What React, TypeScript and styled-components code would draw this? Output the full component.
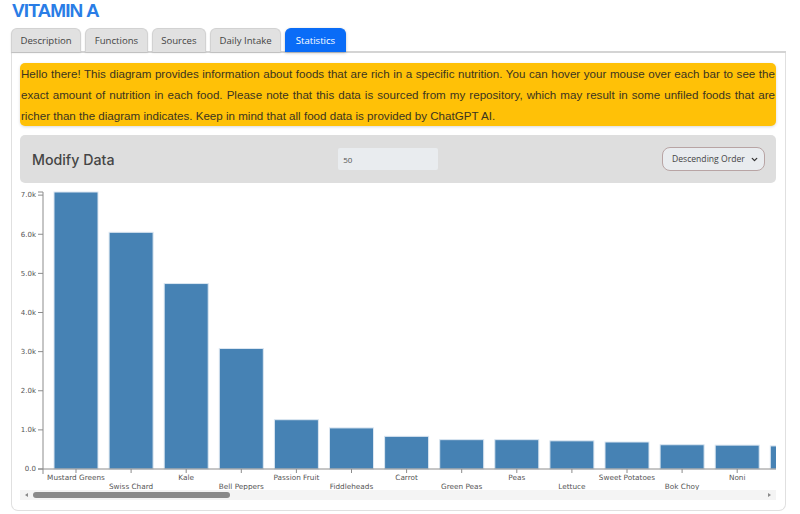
import { useRef, useState } from 'react'
import styled, { createGlobalStyle } from 'styled-components'
import { ChevronDown } from 'lucide-react'

const GlobalStyle = createGlobalStyle`
  body {
    margin: 0;
    background: #ffffff;
    font-family: "Open Sans", "Liberation Sans", sans-serif;
  }
`

// ─── data ──────────────────────────────────────────────────────────────────────

const FOODS: { name: string; value: number }[] = [
  { name: 'Mustard Greens', value: 7080 },
  { name: 'Swiss Chard', value: 6050 },
  { name: 'Kale', value: 4740 },
  { name: 'Bell Peppers', value: 3080 },
  { name: 'Passion Fruit', value: 1260 },
  { name: 'Fiddleheads', value: 1050 },
  { name: 'Carrot', value: 835 },
  { name: 'Green Peas', value: 750 },
  { name: 'Peas', value: 750 },
  { name: 'Lettuce', value: 720 },
  { name: 'Sweet Potatoes', value: 690 },
  { name: 'Bok Choy', value: 620 },
  { name: 'Noni', value: 610 },
  { name: 'Spinach', value: 590 },
  { name: 'Mango', value: 560 },
  { name: 'Cantaloupe', value: 530 },
  { name: 'Apricots', value: 500 },
  { name: 'Pumpkin', value: 470 },
  { name: 'Butternut Squash', value: 440 },
  { name: 'Tomatoes', value: 410 },
  { name: 'Broccoli', value: 380 },
  { name: 'Papaya', value: 350 },
  { name: 'Red Peppers', value: 330 },
  { name: 'Watermelon', value: 310 },
  { name: 'Grapefruit', value: 290 },
  { name: 'Guava', value: 270 },
  { name: 'Persimmon', value: 250 },
  { name: 'Egg Yolk', value: 230 },
  { name: 'Cheese', value: 210 },
  { name: 'Milk', value: 190 },
  { name: 'Butter', value: 175 },
  { name: 'Collard Greens', value: 160 },
  { name: 'Turnip Greens', value: 150 },
  { name: 'Dandelion Greens', value: 140 },
  { name: 'Beet Greens', value: 130 },
  { name: 'Asparagus', value: 120 },
  { name: 'Okra', value: 110 },
  { name: 'Plums', value: 100 },
  { name: 'Peaches', value: 92 },
  { name: 'Nectarines', value: 85 },
  { name: 'Tangerines', value: 78 },
  { name: 'Cherries', value: 70 },
  { name: 'Kiwi', value: 62 },
  { name: 'Zucchini', value: 55 },
  { name: 'Brussels Sprouts', value: 48 },
  { name: 'Cabbage', value: 40 },
  { name: 'Oranges', value: 34 },
  { name: 'Corn', value: 28 },
  { name: 'Avocado', value: 22 },
  { name: 'Celery', value: 15 },
]

// ─── layout ────────────────────────────────────────────────────────────────────

const Page = styled.div`
  padding: 0 0 4px 11px;
  width: 775px;
`

const Title = styled.h1`
  margin: 0 0 6px 1px;
  font-family: "Liberation Sans", Arial, sans-serif;
  font-size: 19px;
  line-height: 22px;
  letter-spacing: -0.9px;
  font-weight: 700;
  color: #2a7de6;
`

const TabBar = styled.div`
  display: flex;
  gap: 4px;
  border-bottom: 2px solid #d4d4d4;
`

const Tab = styled.button<{ $active?: boolean }>`
  height: 24px;
  padding: 0 ${({ $active }) => ($active ? 9.5 : 8.5)}px;
  margin-bottom: -1px;
  border: 1px solid ${({ $active }) => ($active ? '#0a6cf5' : '#d2d2d2')};
  border-bottom: none;
  border-radius: 6px 6px 0 0;
  background: ${({ $active }) => ($active ? '#0a6cf7' : '#e1e1e1')};
  color: ${({ $active }) => ($active ? '#ffffff' : '#444444')};
  font-family: "Open Sans", sans-serif;
  font-size: 9.6px;
  box-shadow: ${({ $active }) => ($active ? '0 1px 3px rgba(0,0,0,0.25)' : '0 1px 2px rgba(0,0,0,0.12)')};
  cursor: pointer;
`

const Panel = styled.div`
  border: 1px solid #e0e0e0;
  border-top: none;
  border-radius: 0 0 7px 7px;
  padding: 10px 9px 10px 8px;
  display: flex;
  flex-direction: column;
`

const Notice = styled.p`
  margin: 0;
  background: #ffc107;
  border-radius: 5px;
  box-shadow: 0 1px 3px rgba(0, 0, 0, 0.15);
  font-family: "Liberation Sans", Arial, sans-serif;
  font-size: 11.6px;
  line-height: 21px;
  color: #3b3420;
  text-align: justify;
  padding: 0 1px;
`

const ModifyBar = styled.div`
  margin-top: 9px;
  height: 48px;
  background: #dedede;
  border-radius: 5px;
  display: flex;
  align-items: center;
  justify-content: space-between;
  padding: 0 11px 0 12px;
`

const ModifyTitle = styled.h2`
  margin: 0;
  font-family: "Inter", "Open Sans", sans-serif;
  font-size: 14.2px;
  font-weight: 500;
  color: #454545;
`

const LimitInput = styled.input`
  width: 100px;
  height: 22px;
  box-sizing: border-box;
  border: none;
  border-radius: 2px;
  background: #e9ecef;
  padding: 0 5px;
  font-family: "Open Sans", sans-serif;
  font-size: 8px;
  color: #555555;
  outline: none;
`

const SelectWrap = styled.div`
  position: relative;
  display: flex;
`

const OrderSelect = styled.select`
  appearance: none;
  width: 103px;
  height: 24px;
  border: 1.5px solid #b8a4a4;
  border-radius: 8px;
  background: #e9ecef;
  padding: 0 16px 0 9px;
  font-family: "Open Sans", sans-serif;
  font-size: 8.6px;
  color: #444444;
`

const SelectArrow = styled(ChevronDown)`
  position: absolute;
  right: 6px;
  top: 8px;
  pointer-events: none;
  color: #333333;
`

const ChartScroll = styled.div`
  margin-top: 3px;
  overflow-x: auto;
  overflow-y: hidden;
  scrollbar-width: none;
`

const ChartSvg = styled.svg`
  display: block;
  font-family: "DejaVu Sans", Verdana, sans-serif;
`

const ScrollTrack = styled.div`
  height: 10px;
  background: #f4f4f4;
  display: flex;
  align-items: center;
  padding: 0 3px;
  gap: 3px;
`

const ScrollArrow = styled.span<{ $dir: 'left' | 'right' }>`
  width: 0;
  height: 0;
  margin: 0 2px;
  border-top: 2.5px solid transparent;
  border-bottom: 2.5px solid transparent;
  ${({ $dir }) => ($dir === 'left' ? 'border-right: 3px solid #8a8a8a;' : 'border-left: 3px solid #8a8a8a;')}
`

const ScrollRail = styled.div`
  flex: 1;
  height: 6px;
  position: relative;
`

const ScrollThumb = styled.div`
  position: absolute;
  top: 0;
  height: 6px;
  border-radius: 3px;
  background: #8a8a8a;
`

// ─── chart ─────────────────────────────────────────────────────────────────────

const AXIS_X = 23
const BASE_Y = 283
const TOP_Y = 6
const STEP = 55.1
const BAR_W = 44
const PAD = 11
const HEIGHT = 304
const WIDTH = AXIS_X + PAD + FOODS.length * STEP + 10
const VIEW_W = 755

const BarChart = () => {
  const max = Math.max(...FOODS.map((f) => f.value))
  const y = (v: number) => BASE_Y - (v / max) * (BASE_Y - TOP_Y)
  const ticks = [0, 1000, 2000, 3000, 4000, 5000, 6000, 7000]
  const fmt = (v: number) => (v === 0 ? '0.0' : `${(v / 1000).toFixed(1)}k`)
  const endX = AXIS_X + FOODS.length * STEP + 6

  return (
    <ChartSvg width={WIDTH} height={HEIGHT}>
      {FOODS.map((f, i) => {
        const x = AXIS_X + PAD + i * STEP
        return (
          <rect
            key={f.name}
            x={x}
            y={y(f.value)}
            width={BAR_W}
            height={BASE_Y - y(f.value)}
            fill="#4682b4"
            stroke="#dbe6f1"
            strokeWidth={1}
          >
            <title>{`${f.name}: ${f.value} µg`}</title>
          </rect>
        )
      })}

      {/* y axis */}
      <path
        d={`M${AXIS_X - 5},${TOP_Y}H${AXIS_X}V${BASE_Y}H${AXIS_X - 5}`}
        fill="none"
        stroke="#8c8c8c"
      />
      {ticks.map((t) => (
        <g key={t} transform={`translate(0,${y(t)})`}>
          <line x1={AXIS_X - 5} x2={AXIS_X} stroke="#8c8c8c" />
          <text x={AXIS_X - 7} dy="0.32em" textAnchor="end" fontSize={7} fill="#555">
            {fmt(t)}
          </text>
        </g>
      ))}

      {/* x axis */}
      <path d={`M${AXIS_X},${BASE_Y + 5}V${BASE_Y}H${endX}V${BASE_Y + 5}`} fill="none" stroke="#8c8c8c" />
      {FOODS.map((f, i) => {
        const cx = AXIS_X + PAD + i * STEP + BAR_W / 2
        return (
          <g key={f.name} transform={`translate(${cx},${BASE_Y})`}>
            <line y2={4} stroke="#8c8c8c" />
            <text y={i % 2 === 0 ? 11 : 19.5} textAnchor="middle" fontSize={7.3} fill="#555">
              {f.name}
            </text>
          </g>
        )
      })}
    </ChartSvg>
  )
}

// ─── App ───────────────────────────────────────────────────────────────────────

const TABS = ['Description', 'Functions', 'Sources', 'Daily Intake', 'Statistics']

export default function App() {
  const scrollRef = useRef<HTMLDivElement>(null)
  const [progress, setProgress] = useState(0)
  const railW = VIEW_W - 26
  const thumbW = Math.round((VIEW_W / WIDTH) * railW)

  const onScroll = () => {
    const el = scrollRef.current
    if (!el) return
    setProgress(el.scrollLeft / Math.max(1, el.scrollWidth - el.clientWidth))
  }

  return (
    <Page>
      <GlobalStyle />
      <Title>VITAMIN A</Title>
      <TabBar>
        {TABS.map((t) => (
          <Tab key={t} $active={t === 'Statistics'}>
            {t}
          </Tab>
        ))}
      </TabBar>
      <Panel>
        <Notice>
          Hello there! This diagram provides information about foods that are rich in a specific
          nutrition. You can hover your mouse over each bar to see the exact amount of nutrition in
          each food. Please note that this data is sourced from my repository, which may result in
          some unfiled foods that are richer than the diagram indicates. Keep in mind that all food
          data is provided by ChatGPT AI.
        </Notice>
        <ModifyBar>
          <ModifyTitle>Modify Data</ModifyTitle>
          <LimitInput type="number" defaultValue={50} />
          <SelectWrap>
            <OrderSelect defaultValue="desc">
              <option value="desc">Descending Order</option>
              <option value="asc">Ascending Order</option>
            </OrderSelect>
            <SelectArrow size={9} strokeWidth={3.5} />
          </SelectWrap>
        </ModifyBar>
        <ChartScroll ref={scrollRef} onScroll={onScroll}>
          <BarChart />
        </ChartScroll>
        <ScrollTrack>
          <ScrollArrow $dir="left" />
          <ScrollRail>
            <ScrollThumb style={{ width: thumbW, left: progress * (railW - thumbW) }} />
          </ScrollRail>
          <ScrollArrow $dir="right" />
        </ScrollTrack>
      </Panel>
    </Page>
  )
}
